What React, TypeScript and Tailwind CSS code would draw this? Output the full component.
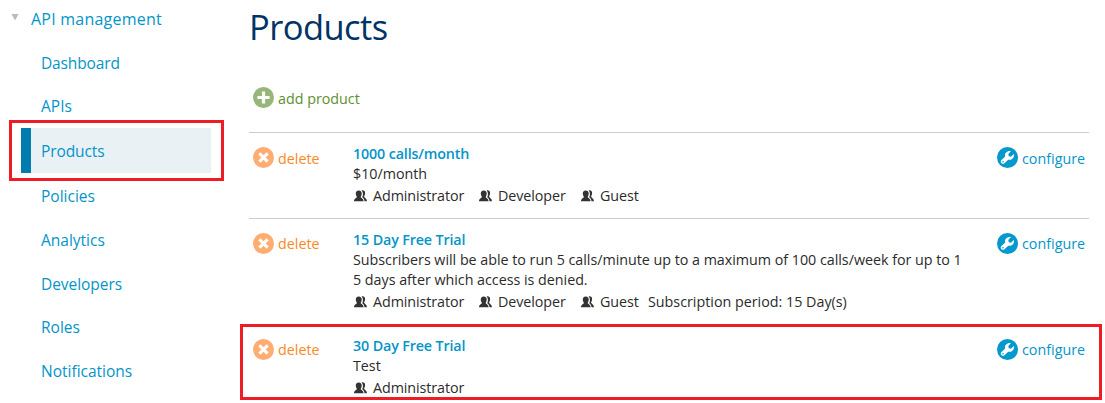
import React from "react";

function PlusIcon() {
  return (
    <svg width="21" height="21" viewBox="0 0 21 21" className="block shrink-0">
      <circle cx="10.5" cy="10.5" r="10.5" fill="#96b67a" />
      <path d="M10.5 4.4v12.2M4.4 10.5h12.2" stroke="#fff" strokeWidth="3.2" fill="none" />
    </svg>
  );
}

function DeleteIcon() {
  return (
    <svg width="21" height="21" viewBox="0 0 21 21" className="block shrink-0">
      <circle cx="10.5" cy="10.5" r="10.5" fill="#ffad70" />
      <path d="M6.4 6.4l8.2 8.2M14.6 6.4l-8.2 8.2" stroke="#fff" strokeWidth="3.1" fill="none" />
    </svg>
  );
}

function WrenchIcon() {
  return (
    <svg width="21" height="21" viewBox="0 0 21 21" className="block shrink-0">
      <circle cx="10.5" cy="10.5" r="10.5" fill="#0499cd" />
      <path
        d="M14 4 C11 3.4 8 5.4 8 8.2 L8.2 9.6 L4.2 13.2 C2.8 15.2 4.8 17.6 7.2 16.4 L11.2 12.7 C14.4 13.5 17.6 10.8 16.9 6.9 L13.9 9.7 L11.8 9.2 L11.3 6.9 Z"
        fill="#fff"
      />
      <circle cx="6" cy="14.8" r="0.8" fill="#0499cd" />
    </svg>
  );
}

function GroupIcon() {
  return (
    <svg width="13" height="12" viewBox="0 0 13 12" className="block shrink-0">
      <path
        d="M7.6 0.4 C9.8 0 11.4 1.2 11.1 3.6 C11 5.2 10.2 5.8 10.1 6.6 C10.2 7.8 12.8 8.2 12.9 11.2 H10.6 C10.2 8.8 9.1 8 8.2 7.3 C9 5.9 9.6 2.6 7.6 0.4Z"
        fill="#333"
      />
      <path
        d="M4.7 0.4 C6.8 0.4 7.9 1.8 7.7 3.9 C7.6 5.3 6.8 6.2 6.7 7.1 C7 8.3 9.4 8.4 9.6 11.2 H0 C0.1 8.4 2.6 8.3 2.9 7.1 C2.8 6.2 1.9 5.3 1.8 3.9 C1.6 1.8 2.7 0.4 4.7 0.4Z"
        fill="#333"
      />
    </svg>
  );
}

const navItems = [
  { label: "Dashboard", row: "h-[43px] tracking-[-0.13px]" },
  { label: "APIs", row: "h-[43px] pt-px" },
  { label: "Products", row: "h-[45px] pt-0.5 tracking-[-0.1px]" },
  { label: "Policies", row: "h-[45px] pt-0.5" },
  { label: "Analytics", row: "h-[44px] pt-0.5" },
  { label: "Developers", row: "h-[43px] pt-0.5 tracking-[-0.05px]" },
  { label: "Roles", row: "h-[44px] pt-0.5" },
  { label: "Notifications", row: "h-[44px] pt-0.5" },
];

function Sidebar() {
  return (
    <nav className="w-[249px] shrink-0 text-[15.5px] text-[#0495c9]">
      <div className="flex h-[42px]">
        <svg width="8" height="7" viewBox="0 0 8 7" className="mt-[14px] ml-[11px] block">
          <path d="M0.5 0h7L4 6.5z" fill="#bbb" />
        </svg>
        <a className="ml-3 text-[16px] leading-[38px] tracking-[0.23px]">API management</a>
      </div>
      {navItems.map(({ label, row }) => (
        <div
          key={label}
          className={`ml-[21px] flex w-[190px] items-center ${row} ${
            label === "Products" ? "border-l-10 border-[#007dae] bg-[#e9f1f5] pl-[10px]" : "pl-5"
          }`}
        >
          <a>{label}</a>
        </div>
      ))}
    </nav>
  );
}

type Product = {
  name: string;
  description: string[];
  groups: string[];
  period?: string;
  row: string;
  action: string;
};

const products: Product[] = [
  {
    name: "1000 calls/month",
    description: ["$10/month"],
    groups: ["Administrator", "Developer", "Guest"],
    row: "h-[86px]",
    action: "leading-6",
  },
  {
    name: "15 Day Free Trial",
    description: [
      "Subscribers will be able to run 5 calls/minute up to a maximum of 100 calls/week for up to 1",
      "5 days after which access is denied.",
    ],
    groups: ["Administrator", "Developer", "Guest"],
    period: "Subscription period: 15 Day(s)",
    row: "h-[106px]",
    action: "leading-[22px]",
  },
  {
    name: "30 Day Free Trial",
    description: ["Test"],
    groups: ["Administrator"],
    row: "h-[79px]",
    action: "leading-[22px]",
  },
];

const groupWidths: Record<string, string> = {
  Administrator: "w-[125px]",
  Developer: "w-[102px]",
  Guest: "w-[67px]",
};

function ProductRow({ product }: { product: Product }) {
  return (
    <div className={`flex border-t border-[#cccccc] ${product.row}`}>
      <div className="flex w-[104px] shrink-0 pt-[14px] pl-1">
        <DeleteIcon />
        <a className={`ml-1 text-[#fb8a1e] ${product.action}`}>delete</a>
      </div>
      <div className="w-[644px] shrink-0 pt-[11px] leading-5 tracking-[-0.02px] whitespace-nowrap text-[#2b2b2b]">
        <div className="font-semibold tracking-[-0.14px] text-[#0495c9]">{product.name}</div>
        {product.description.map((line) => (
          <p key={line}>{line}</p>
        ))}
        <div className="mt-0.5 flex items-center tracking-[-0.08px]">
          {product.groups.map((group) => (
            <span key={group} className={`flex items-center gap-1.5 pl-px ${groupWidths[group]}`}>
              <GroupIcon />
              {group}
            </span>
          ))}
          {product.period && <span className="pl-px tracking-normal">{product.period}</span>}
        </div>
      </div>
      <div className="flex pt-[14px]">
        <WrenchIcon />
        <a className={`ml-1 text-[#0495c9] ${product.action}`}>configure</a>
      </div>
    </div>
  );
}

export default function App() {
  return (
    <div className="relative flex h-[403px] w-[1105px] overflow-hidden bg-white font-['Open_Sans','Noto_Sans',sans-serif] text-[14.3px]">
      <Sidebar />
      <main className="w-[840px] shrink-0">
        <h1 className="h-[87px] text-[34.5px] leading-[53px] tracking-[-0.55px] text-[#003366]">Products</h1>
        <div className="flex h-[45px] pl-1">
          <PlusIcon />
          <a className="ml-1 leading-6 text-[#5e8f2e]">add product</a>
        </div>
        {products.map((product) => (
          <ProductRow key={product.name} product={product} />
        ))}
      </main>
      <div className="pointer-events-none absolute top-[120px] left-[9px] h-[61px] w-[215px] border-3 border-[#ee1c25]" />
      <div className="pointer-events-none absolute top-[324px] left-[240px] h-[76px] w-[862px] border-3 border-[#ee1c25]" />
    </div>
  );
}
